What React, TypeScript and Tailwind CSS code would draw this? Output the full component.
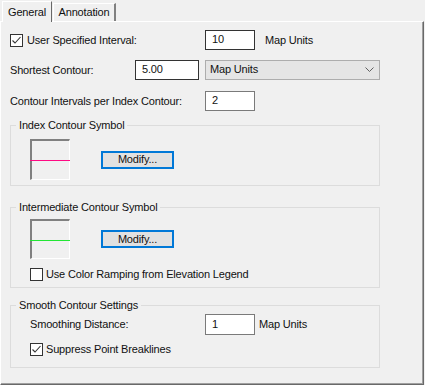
import React from "react";

function Check({ checked }: { checked?: boolean }) {
  return (
    <div className="w-[13px] h-[13px] border border-[#333333] bg-white flex items-center justify-center shrink-0">
      {checked && (
        <svg width="11" height="11" viewBox="0 0 11 11">
          <path d="M1.5 5.5 L4 8 L9.5 2" fill="none" stroke="#333333" strokeWidth="1.1" />
        </svg>
      )}
    </div>
  );
}

function Input({ value, w, h = 20, dark }: { value: string; w: string; h?: number; dark?: boolean }) {
  return (
    <div
      className={`${w} ${h === 21 ? "h-[21px]" : "h-[20px]"} bg-white border ${dark ? "border-[#333333]" : "border-[#7a7a7a]"} flex items-center pl-[6px] pb-[1px] shrink-0`}
    >
      {value}
    </div>
  );
}

function Symbol({ color, h41 }: { color: string; h41?: boolean }) {
  return (
    <div
      className={`relative w-[40px] ${h41 ? "h-[41px]" : "h-[40px]"} border-t-2 border-l-2 border-t-[#808080] border-l-[#808080] border-r border-b border-r-white border-b-white bg-[#f0f0f0] shrink-0`}
    >
      <div className="absolute left-[-2px] right-[-1px] top-1/2 h-px" style={{ backgroundColor: color }} />
    </div>
  );
}

function ModifyButton() {
  return (
    <div className="w-[73px] h-[18px] border-2 border-[#0078d7] bg-[#e1e1e1] flex items-center justify-center shrink-0">
      Modify...
    </div>
  );
}

export default function App() {
  return (
    <div className="w-[425px] h-[385px] bg-[#f0f0f0] text-[11px] leading-[13px] tracking-[-0.17px] text-[#111] font-['Liberation_Sans',Arial,sans-serif] overflow-hidden">
      {/* tabs */}
      <div className="relative z-10 flex items-end h-[21px] pl-[2px]">
        <div className="h-[21px] w-[50px] -mb-px bg-[#f0f0f0] border-t border-l border-white border-r border-r-[#696969] flex items-start justify-center pt-[4px]">
          General
        </div>
        <div className="h-[18px] w-[63px] ml-px bg-[#f0f0f0] border-t border-l border-white border-r-2 border-r-[#808080] flex items-center justify-center pb-[1px]">
          Annotation
        </div>
      </div>
      {/* panel */}
      <div className="w-[424px] h-[364px] border-t border-l border-white border-r border-b border-r-[#696969] border-b-[#696969] shadow-[inset_-1px_-1px_0_#a0a0a0] pl-[9px] pt-[8px]">
        {/* row 1 */}
        <div className="flex items-center h-[20px]">
          <div className="w-[195px] flex items-center">
            <Check checked />
            <span className="ml-[4px]">User Specified Interval:</span>
          </div>
          <Input value="10" w="w-[50px]" dark />
          <span className="ml-[10px]">Map Units</span>
        </div>
        {/* row 2 */}
        <div className="flex items-center h-[20px] mt-[10px]">
          <span className="w-[125px]">Shortest Contour:</span>
          <Input value="5.00" w="w-[64px]" dark />
          <div className="ml-[6px] w-[175px] h-[20px] bg-[#e5e5e5] border border-[#adadad] flex items-center justify-between pl-[4px] pr-[5px] pb-[1px]">
            <span>Map Units</span>
            <svg width="9" height="5" viewBox="0 0 9 5">
              <path d="M0.5 0.5 L4.5 4.5 L8.5 0.5" fill="none" stroke="#606060" strokeWidth="1" />
            </svg>
          </div>
        </div>
        {/* row 3 */}
        <div className="flex items-center h-[20px] mt-[11px]">
          <span className="w-[195px]">Contour Intervals per Index Contour:</span>
          <Input value="2" w="w-[50px]" />
        </div>

        {/* group 1 */}
        <div className="mt-[14px] w-[370px] border border-[#dcdcdc] pb-[5px]">
          <div className="-mt-[7px] ml-[5px] px-[3px] w-fit bg-[#f0f0f0]">Index Contour Symbol</div>
          <div className="flex items-center mt-[7px] ml-[19px]">
            <Symbol color="#ff0a84" h41 />
            <div className="ml-[31px]">
              <ModifyButton />
            </div>
          </div>
        </div>

        {/* group 2 */}
        <div className="mt-[21px] w-[370px] border border-[#dcdcdc] pb-[6px]">
          <div className="-mt-[7px] ml-[5px] px-[3px] w-fit bg-[#f0f0f0]">Intermediate Contour Symbol</div>
          <div className="flex items-center mt-[5px] ml-[19px]">
            <Symbol color="#22e634" />
            <div className="ml-[31px]">
              <ModifyButton />
            </div>
          </div>
          <div className="flex items-center mt-[9px] ml-[19px]">
            <Check />
            <span className="ml-[3px]">Use Color Ramping from Elevation Legend</span>
          </div>
        </div>

        {/* group 3 */}
        <div className="mt-[17px] w-[370px] border border-[#dcdcdc] pb-[11px]">
          <div className="-mt-[7px] ml-[5px] px-[3px] w-fit bg-[#f0f0f0]">Smooth Contour Settings</div>
          <div className="flex items-center mt-[2px] ml-[19px]">
            <span className="w-[175px]">Smoothing Distance:</span>
            <Input value="1" w="w-[50px]" h={21} />
            <span className="ml-[4px]">Map Units</span>
          </div>
          <div className="flex items-center mt-[8px] ml-[19px]">
            <Check checked />
            <span className="ml-[3px]">Suppress Point Breaklines</span>
          </div>
        </div>
      </div>
    </div>
  );
}
